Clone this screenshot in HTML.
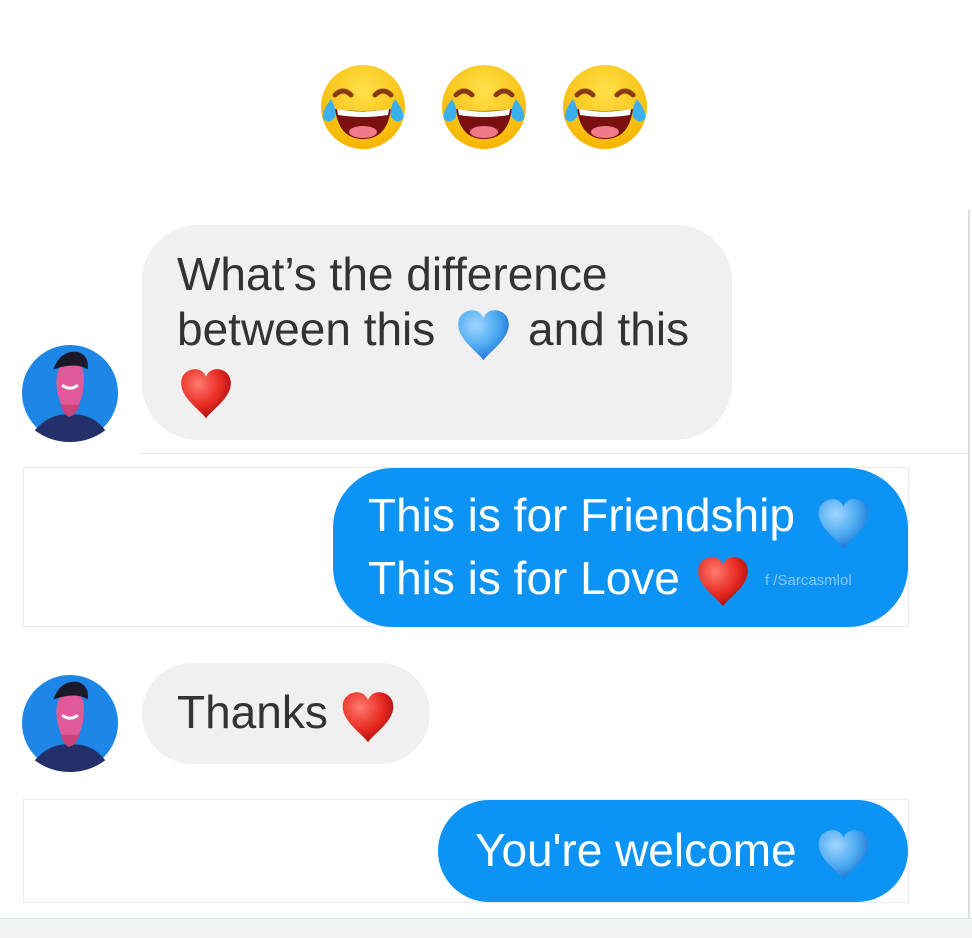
<!DOCTYPE html>
<html><head><meta charset="utf-8">
<style>
body{margin:0;width:972px;height:937px;background:#fff;position:relative;overflow:hidden;font-family:"Liberation Sans",Arial,sans-serif}
.a{position:absolute}
.t{position:absolute;font-size:46px;line-height:46px;white-space:nowrap}
.g{color:#333}
.w{color:#fff}
svg.h{position:absolute}
</style></head><body>
<svg width="0" height="0" style="position:absolute">
<defs>
<radialGradient id="bh" cx="35%" cy="30%" r="75%"><stop offset="0" stop-color="#9fd6ff"/><stop offset="0.6" stop-color="#4aa8f0"/><stop offset="1" stop-color="#1f6fcf"/></radialGradient>
<radialGradient id="rh" cx="35%" cy="30%" r="75%"><stop offset="0" stop-color="#ff7a6e"/><stop offset="0.6" stop-color="#e82a22"/><stop offset="1" stop-color="#a30e0e"/></radialGradient>
<radialGradient id="face" cx="50%" cy="30%" r="70%"><stop offset="0" stop-color="#ffe14a"/><stop offset="1" stop-color="#f5b400"/></radialGradient>
<symbol id="heart" viewBox="0 0 100 100"><path d="M50 95 C40 80 4 58 4 30 C4 12 18 4 30 4 C40 4 47 10 50 18 C53 10 60 4 70 4 C82 4 96 12 96 30 C96 58 60 80 50 95Z"/></symbol>
<symbol id="emo" viewBox="0 0 100 100">
<circle cx="50" cy="50" r="42" fill="url(#face)"/>
<path d="M22 38 Q30 30 38 38" stroke="#8a3a10" stroke-width="5" fill="none" stroke-linecap="round"/>
<path d="M62 38 Q70 30 78 38" stroke="#8a3a10" stroke-width="5" fill="none" stroke-linecap="round"/>
<path d="M22 52 Q50 56 78 52 Q74 82 50 82 Q26 82 22 52Z" fill="#7a1010"/>
<path d="M24 52 Q50 57 76 52 L75 58 Q50 62 25 58Z" fill="#fff"/>
<ellipse cx="50" cy="75" rx="14" ry="6" fill="#f07a8a"/>
<path d="M18 42 Q8 55 10 62 Q16 68 22 60 Q24 52 18 42Z" fill="#3ab0ef"/>
<path d="M82 42 Q92 55 90 62 Q84 68 78 60 Q76 52 82 42Z" fill="#3ab0ef"/>
</symbol>
<symbol id="av" viewBox="0 0 100 100">
<circle cx="50" cy="50" r="49" fill="#1d86e6"/>
<path d="M14 88 Q30 70 50 72 Q72 70 86 88 Q70 100 50 100 Q30 100 14 88Z" fill="#23306a"/>
<path d="M36 40 Q36 18 52 16 Q66 18 64 42 Q62 66 50 68 Q38 66 36 40Z" fill="#e05a9a"/>
<path d="M40 62 Q46 76 50 74 Q56 72 60 62 Z" fill="#c8447a"/>
<path d="M33 26 Q40 6 58 8 Q70 12 68 26 Q56 18 33 26Z" fill="#1a1a2a"/>
<path d="M42 42 Q50 48 58 42" stroke="#fff" stroke-width="3" fill="none"/>
</symbol>
</defs></svg>

<svg class="a" style="left:313px;top:57px" width="100" height="100"><use href="#emo"/></svg>
<svg class="a" style="left:434px;top:57px" width="100" height="100"><use href="#emo"/></svg>
<svg class="a" style="left:555px;top:57px" width="100" height="100"><use href="#emo"/></svg>

<div class="a" style="left:968px;top:210px;width:2px;height:710px;background:#d7dde2"></div>
<div class="a" style="left:138px;top:453px;width:830px;height:1px;background:#e6ecef"></div>
<div class="a" style="left:0;top:918px;width:972px;height:19px;background:#f1f5f7;border-top:1px solid #d9e2e7"></div>

<div class="a" style="left:142px;top:225px;width:590px;height:215px;background:#f1f0f0;border-radius:56px"></div>
<div class="t g" style="left:177px;top:251px">What’s the difference</div>
<div class="t g" style="left:177px;top:306px">between this</div>
<svg class="h" style="left:455px;top:308px" width="57" height="55" fill="url(#bh)"><use href="#heart"/></svg>
<div class="t g" style="left:528px;top:306px">and this</div>
<svg class="h" style="left:178px;top:367px" width="56" height="54" fill="url(#rh)"><use href="#heart"/></svg>
<svg class="a" style="left:21px;top:344px" width="98" height="98"><use href="#av"/></svg>

<div class="a" style="left:23px;top:467px;width:886px;height:160px;border:1px solid #e8ecee;box-sizing:border-box"></div>
<div class="a" style="left:333px;top:468px;width:575px;height:159px;background:#0c93f4;border-radius:60px"></div>
<div class="t w" style="left:368px;top:492px">This is for Friendship</div>
<svg class="h" style="left:815px;top:497px" width="57" height="54" fill="url(#bh)"><use href="#heart"/></svg>
<div class="t w" style="left:368px;top:555px">This is for Love</div>
<svg class="h" style="left:695px;top:555px" width="56" height="54" fill="url(#rh)"><use href="#heart"/></svg>
<div class="a" style="left:765px;top:572px;font-size:15px;color:#8fc7f5;white-space:nowrap">f /Sarcasmlol</div>

<div class="a" style="left:142px;top:663px;width:288px;height:101px;background:#f1f0f0;border-radius:50px"></div>
<div class="t g" style="left:177px;top:689px">Thanks</div>
<svg class="h" style="left:340px;top:690px" width="56" height="55" fill="url(#rh)"><use href="#heart"/></svg>
<svg class="a" style="left:21px;top:673px" width="98" height="100"><use href="#av"/></svg>

<div class="a" style="left:23px;top:799px;width:886px;height:104px;border:1px solid #e8ecee;box-sizing:border-box"></div>
<div class="a" style="left:438px;top:800px;width:470px;height:102px;background:#0c93f4;border-radius:51px"></div>
<div class="t w" style="left:475px;top:827px">You're welcome</div>
<svg class="h" style="left:815px;top:828px" width="57" height="54" fill="url(#bh)"><use href="#heart"/></svg>
</body></html>
